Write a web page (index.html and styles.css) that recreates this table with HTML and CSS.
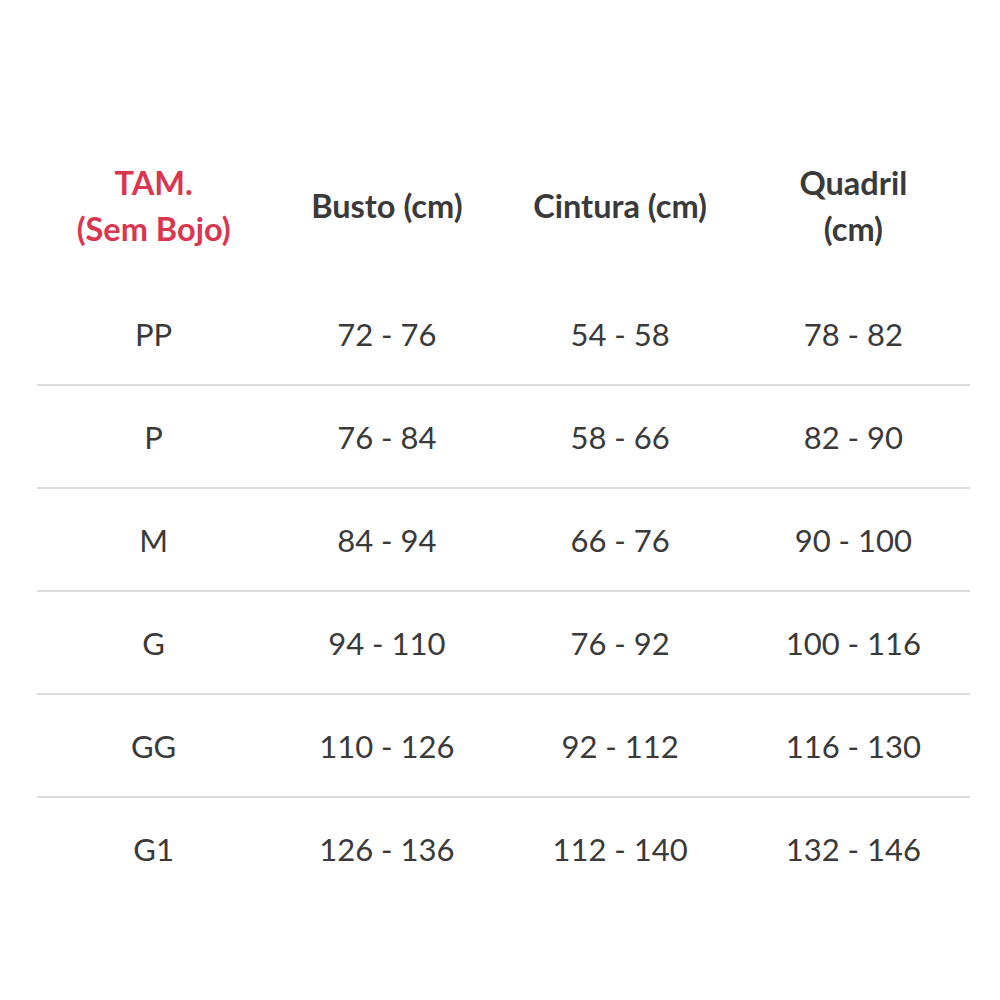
FILE: index.html
```html
<!DOCTYPE html>
<html lang="pt">
<head>
<meta charset="utf-8">
<title>Tabela de Medidas</title>
<link rel="stylesheet" href="styles.css">
</head>
<body>
<table class="size-table">
  <thead>
    <tr>
      <th class="accent">TAM.<br>(Sem Bojo)</th>
      <th>Busto (cm)</th>
      <th>Cintura (cm)</th>
      <th>Quadril<br>(cm)</th>
    </tr>
  </thead>
  <tbody>
    <tr><td>PP</td><td>72 - 76</td><td>54 - 58</td><td>78 - 82</td></tr>
    <tr><td>P</td><td>76 - 84</td><td>58 - 66</td><td>82 - 90</td></tr>
    <tr><td>M</td><td>84 - 94</td><td>66 - 76</td><td>90 - 100</td></tr>
    <tr><td>G</td><td>94 - 110</td><td>76 - 92</td><td>100 - 116</td></tr>
    <tr><td>GG</td><td>110 - 126</td><td>92 - 112</td><td>116 - 130</td></tr>
    <tr><td>G1</td><td>126 - 136</td><td>112 - 140</td><td>132 - 146</td></tr>
  </tbody>
</table>
</body>
</html>
```
FILE: styles.css
```css
html, body {
  margin: 0;
  padding: 0;
  background: #ffffff;
}

body {
  font-family: Lato, "Open Sans", sans-serif;
  color: #3a3a3a;
}

.size-table {
  margin: 129px 0 0 37px;
  width: 933px;
  border-collapse: collapse;
  table-layout: fixed;
}

.size-table th,
.size-table td {
  padding: 0;
  text-align: center;
  vertical-align: middle;
}

.size-table th {
  height: 154px;
  font-size: 32.5px;
  font-weight: 700;
  line-height: 46px;
}

.size-table th.accent {
  color: #d9364f;
}

.size-table td {
  height: 101px;
  font-size: 31px;
  font-weight: 400;
  line-height: 36px;
  border-bottom: 2px solid #dcdcdc;
}

.size-table tbody tr:last-child td {
  border-bottom: none;
}
```
